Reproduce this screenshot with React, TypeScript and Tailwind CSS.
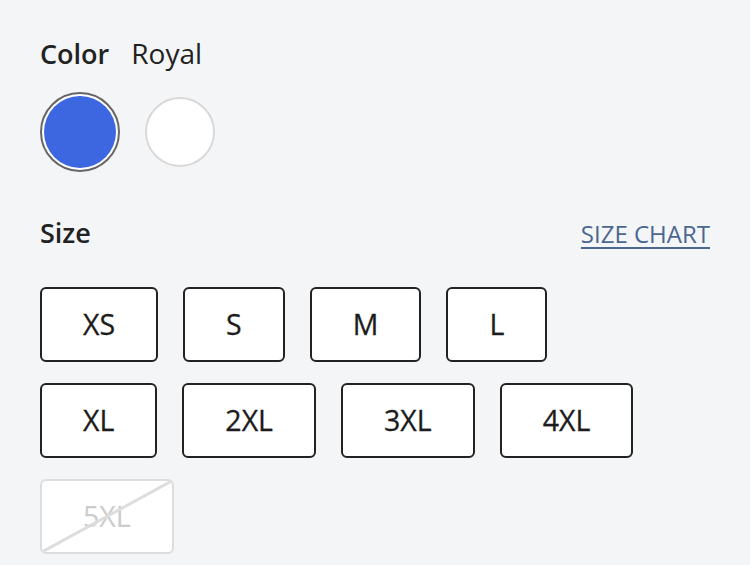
const SIZES = [
  { label: "XS", available: true },
  { label: "S", available: true },
  { label: "M", available: true },
  { label: "L", available: true },
  { label: "XL", available: true },
  { label: "2XL", available: true },
  { label: "3XL", available: true },
  { label: "4XL", available: true },
  { label: "5XL", available: false },
];

export default function App() {
  return (
    <div
      className="min-h-[565px] w-[750px] bg-[#f4f5f7] px-10 pt-[35px] text-[#222]"
      style={{ fontFamily: '"Open Sans", "Noto Sans", sans-serif' }}
    >
      {/* Color */}
      <div className="flex items-baseline gap-[22px] text-[27px] leading-9">
        <span className="font-semibold">Color</span>
        <span className="text-[28px]">Royal</span>
      </div>
      <div className="mt-[20px] flex items-center gap-[25px]">
        <button className="flex h-[80px] w-[80px] items-center justify-center rounded-full border-2 border-[#666] bg-white p-[2px]">
          <span className="block h-full w-full rounded-full bg-[#3d67e0]" />
        </button>
        <button className="h-[70px] w-[70px] rounded-full border-2 border-[#d9d9d9] bg-white" />
      </div>

      {/* Size */}
      <div className="mt-[43px] flex items-baseline justify-between">
        <span className="text-[27px] font-semibold leading-9">Size</span>
        <a href="#" className="text-[24px] uppercase text-[#4b6790] underline underline-offset-4">
          Size chart
        </a>
      </div>
      <div className="mt-[35px] flex w-[640px] flex-wrap gap-x-[25px] gap-y-[21px]">
        {SIZES.map((s) =>
          s.available ? (
            <button
              key={s.label}
              className="h-[75px] min-w-[100px] rounded-[6px] border-2 border-[#222] bg-white px-[41px] text-[28.5px] text-[#1c1c1c] [-webkit-text-stroke:0.3px_currentColor]"
            >
              {s.label}
            </button>
          ) : (
            <button
              key={s.label}
              disabled
              className="relative h-[75px] min-w-[100px] overflow-hidden rounded-[6px] border-2 border-[#ddd] bg-white px-[41px] text-[28.5px] text-[#ccc]"
            >
              {s.label}
              <svg className="absolute inset-0 h-full w-full" preserveAspectRatio="none" viewBox="0 0 100 100">
                <line x1="0" y1="100" x2="100" y2="0" stroke="#ddd" strokeWidth="3" vectorEffect="non-scaling-stroke" />
              </svg>
            </button>
          )
        )}
      </div>
    </div>
  );
}
